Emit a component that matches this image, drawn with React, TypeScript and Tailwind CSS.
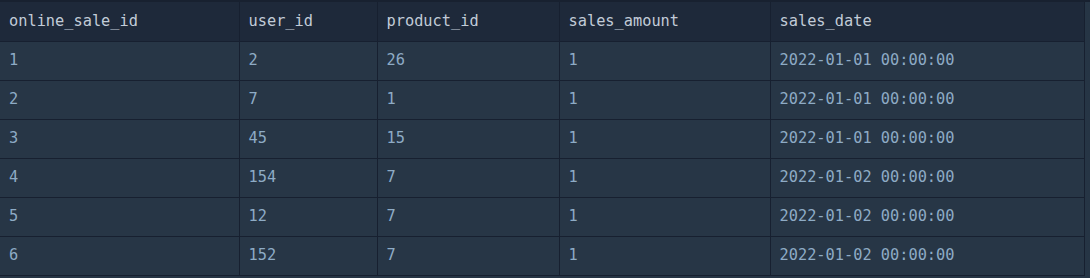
const columns = ["online_sale_id", "user_id", "product_id", "sales_amount", "sales_date"];

const rows = [
  ["1", "2", "26", "1", "2022-01-01 00:00:00"],
  ["2", "7", "1", "1", "2022-01-01 00:00:00"],
  ["3", "45", "15", "1", "2022-01-01 00:00:00"],
  ["4", "154", "7", "1", "2022-01-02 00:00:00"],
  ["5", "12", "7", "1", "2022-01-02 00:00:00"],
  ["6", "152", "7", "1", "2022-01-02 00:00:00"],
];

const widths = ["w-[239px]", "w-[138px]", "w-[182px]", "w-[211px]", "w-[314px]"];

export default function App() {
  return (
    <div className="h-[278px] w-[1090px] overflow-hidden bg-[#263545] border-t-2 border-[#182130] font-['DejaVu_Sans_Mono',monospace] text-[15.3px]">
      <table className="w-[1084px] table-fixed border-collapse">
        <thead>
          <tr className="bg-[#1e293a]">
            {columns.map((c, i) => (
              <th
                key={c}
                className={`${widths[i]} h-[39px] border border-t-0 border-[#172030] px-[9px] text-left font-normal text-[#c2ccd8] first:border-l-0`}
              >
                {c}
              </th>
            ))}
          </tr>
        </thead>
        <tbody>
          {rows.map((r, ri) => (
            <tr key={ri} className="bg-[#273646]">
              {r.map((v, ci) => (
                <td
                  key={ci}
                  className="h-[39px] border border-[#172030] px-[9px] text-[#8eabc5] first:border-l-0"
                >
                  {v}
                </td>
              ))}
            </tr>
          ))}
        </tbody>
      </table>
    </div>
  );
}
